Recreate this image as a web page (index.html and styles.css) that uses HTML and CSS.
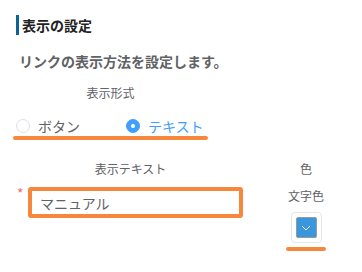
FILE: index.html
```html
<!DOCTYPE html>
<html lang="ja">
<head>
    <meta charset="UTF-8">
    <title>表示の設定</title>
    <link rel="stylesheet" href="styles.css">
</head>
<body>
    <div class="panel">
        <h3 class="title">表示の設定</h3>
        <p class="desc">リンクの表示方法を設定します。</p>

        <div class="format">
            <div class="field-label">表示形式</div>
            <div class="radios">
                <label class="radio">
                    <span class="radio-dot"></span>ボタン
                </label>
                <label class="radio checked">
                    <span class="radio-dot"></span>テキスト
                </label>
            </div>
            <div class="mark"></div>
        </div>

        <div class="row">
            <div class="text-col">
                <div class="field-label">表示テキスト</div>
                <div class="input-line">
                    <span class="required">*</span>
                    <input class="text-input" type="text" value="マニュアル">
                </div>
            </div>
            <div class="color-col">
                <div class="field-label">色</div>
                <div class="sub-label">文字色</div>
                <div class="picker">
                    <span class="swatch">
                        <svg width="10" height="6" viewBox="0 0 10 6"><path d="M1 1l4 4 4-4" fill="none" stroke="#fff" stroke-width="1"/></svg>
                    </span>
                </div>
                <div class="mark short"></div>
            </div>
        </div>
    </div>
</body>
</html>
```

FILE: styles.css
```css
* { margin: 0; padding: 0; box-sizing: border-box; }
body {
    background: #fff;
    font-family: "Noto Sans CJK JP", "Noto Sans", sans-serif;
    color: #606266;
}
.panel {
    padding: 15px 0 0 16px;
}
.title {
    border-left: 3px solid #0b6396;
    padding-left: 3px;
    font-size: 14px;
    line-height: 20px;
    font-weight: bold;
    color: #222;
}
.desc {
    margin: 16px 0 0 3px;
    font-size: 14px;
    line-height: 20px;
    font-weight: bold;
    color: #606266;
}
.field-label {
    font-size: 12px;
    line-height: 16px;
    text-align: center;
    color: #606266;
    white-space: nowrap;
}
.format {
    width: 195px;
    margin: 14px 0 0 -3px;
}
.radios {
    display: flex;
    margin-top: 15px;
    padding-left: 3px;
    height: 20px;
}
.radio {
    display: flex;
    align-items: center;
    flex-shrink: 0;
    white-space: nowrap;
    font-size: 14px;
    line-height: 20px;
    color: #606266;
    margin-right: 46px;
}
.radio-dot {
    flex-shrink: 0;
    width: 14px;
    height: 14px;
    border: 1px solid #dcdfe6;
    border-radius: 50%;
    margin-right: 8px;
    position: relative;
}
.radio.checked { color: #409eff; margin-right: 0; }
.radio.checked .radio-dot {
    background: #409eff;
    border-color: #409eff;
}
.radio.checked .radio-dot::after {
    content: '';
    position: absolute;
    left: 4px;
    top: 4px;
    width: 4px;
    height: 4px;
    border-radius: 50%;
    background: #fff;
}
.mark {
    height: 4px;
    border-radius: 2px;
    background: #f7873d;
}
.row {
    display: flex;
    margin-top: 21px;
}
.text-col {
    width: 227px;
    margin-left: 1px;
    flex-shrink: 0;
}
.input-line {
    display: flex;
    margin-top: 10px;
}
.required {
    color: #f56c6c;
    font-size: 14px;
    line-height: 12px;
    width: 11px;
}
.text-input {
    width: 215px;
    height: 31px;
    border: 4px solid #f7873d;
    border-radius: 3px;
    padding: 0 8px;
    font-family: inherit;
    font-size: 14px;
    color: #606266;
    outline: none;
}
.color-col {
    width: 40px;
    margin-left: 42px;
    flex-shrink: 0;
    display: flex;
    flex-direction: column;
    align-items: center;
}
.sub-label {
    font-size: 12px;
    line-height: 16px;
    margin-top: 11px;
    color: #606266;
    white-space: nowrap;
}
.picker {
    width: 31px;
    height: 31px;
    border: 1px solid #e6e6e6;
    border-radius: 4px;
    padding: 4px;
    margin-top: 8px;
}
.swatch {
    display: flex;
    align-items: center;
    justify-content: center;
    width: 100%;
    height: 100%;
    background: #3a97dd;
    border: 1px solid #999;
    border-radius: 2px;
}
.mark.short {
    width: 40px;
    margin-top: 4px;
}
```
